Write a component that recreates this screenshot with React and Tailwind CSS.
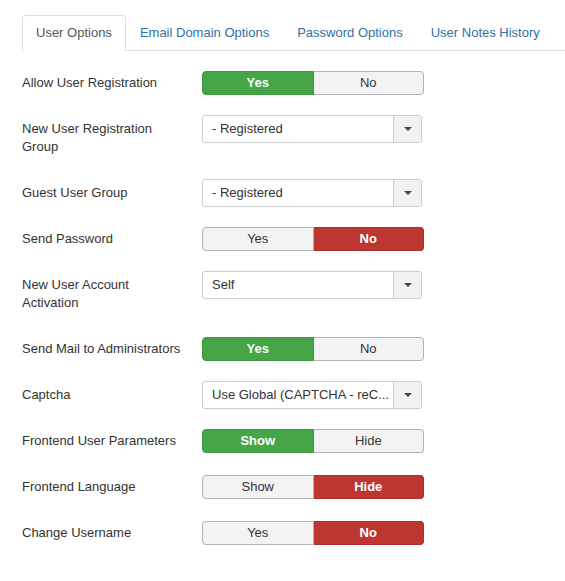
import React from "react";

const tabs = ["User Options", "Email Domain Options", "Password Options", "User Notes History"];

const rows = [
  { label: "Allow User Registration", type: "toggle", options: ["Yes", "No"], active: 0 },
  { label: "New User Registration Group", type: "select", value: "- Registered" },
  { label: "Guest User Group", type: "select", value: "- Registered" },
  { label: "Send Password", type: "toggle", options: ["Yes", "No"], active: 1 },
  { label: "New User Account Activation", type: "select", value: "Self" },
  { label: "Send Mail to Administrators", type: "toggle", options: ["Yes", "No"], active: 0 },
  { label: "Captcha", type: "select", value: "Use Global (CAPTCHA - reC..." },
  { label: "Frontend User Parameters", type: "toggle", options: ["Show", "Hide"], active: 0 },
  { label: "Frontend Language", type: "toggle", options: ["Show", "Hide"], active: 1 },
  { label: "Change Username", type: "toggle", options: ["Yes", "No"], active: 1 },
];

function Toggle({ options, active }) {
  return (
    <div className="mt-[2px] flex h-[24px] w-[222px] text-[13px] leading-[22px]">
      {options.map((opt, i) => {
        const isActive = i === active;
        const first = i === 0;
        let tone = "bg-[#f3f3f3] border-[#b3b3b3] text-[#333] font-normal";
        if (isActive && first) tone = "bg-[#46a546] border-[#3f943f] text-white font-bold";
        if (isActive && !first) tone = "bg-[#bd362f] border-[#a9302a] text-white font-bold";
        return (
          <div
            key={opt}
            className={`flex-1 border text-center ${tone} ${
              first ? "rounded-l-[4px]" : "rounded-r-[4px] border-l-0"
            }`}
          >
            {opt}
          </div>
        );
      })}
    </div>
  );
}

function Select({ value }) {
  return (
    <div className="flex h-[28px] w-[220px] overflow-hidden rounded-[3px] border border-[#cccccc] bg-white text-[13px] text-[#333]">
      <div className="min-w-0 flex-1 whitespace-nowrap pl-[9px] leading-[26px]">{value}</div>
      <div className="flex w-[28px] shrink-0 items-center justify-center border-l border-[#cccccc] bg-[#f2f2f2]">
        <div className="h-0 w-0 border-x-[4px] border-t-[4px] border-x-transparent border-t-[#444]" />
      </div>
    </div>
  );
}

export default function App() {
  return (
    <div
      className="min-h-[581px] bg-white pl-[22px] pt-[15px] text-[13px] text-[#333]"
      style={{ fontFamily: '"Liberation Sans", Arial, sans-serif' }}
    >
      <ul className="flex border-b border-[#dddddd]">
        {tabs.map((t, i) => (
          <li
            key={t}
            className={`-mb-px rounded-t-[4px] border px-[13px] py-[8px] leading-[18px] ${
              i === 0
                ? "border-[#dddddd] border-b-white bg-white text-[#555]"
                : "border-transparent text-[#3071a9]"
            }`}
          >
            {t}
          </li>
        ))}
      </ul>

      <div className="mt-[18px]">
        {rows.map((r) => (
          <div key={r.label} className="mb-[18px] flex items-start">
            <label className="w-[160px] py-[5px] leading-[18px] text-[#333]">{r.label}</label>
            <div className="ml-[20px]">
              {r.type === "toggle" ? (
                <Toggle options={r.options} active={r.active} />
              ) : (
                <Select value={r.value} />
              )}
            </div>
          </div>
        ))}
      </div>
    </div>
  );
}
